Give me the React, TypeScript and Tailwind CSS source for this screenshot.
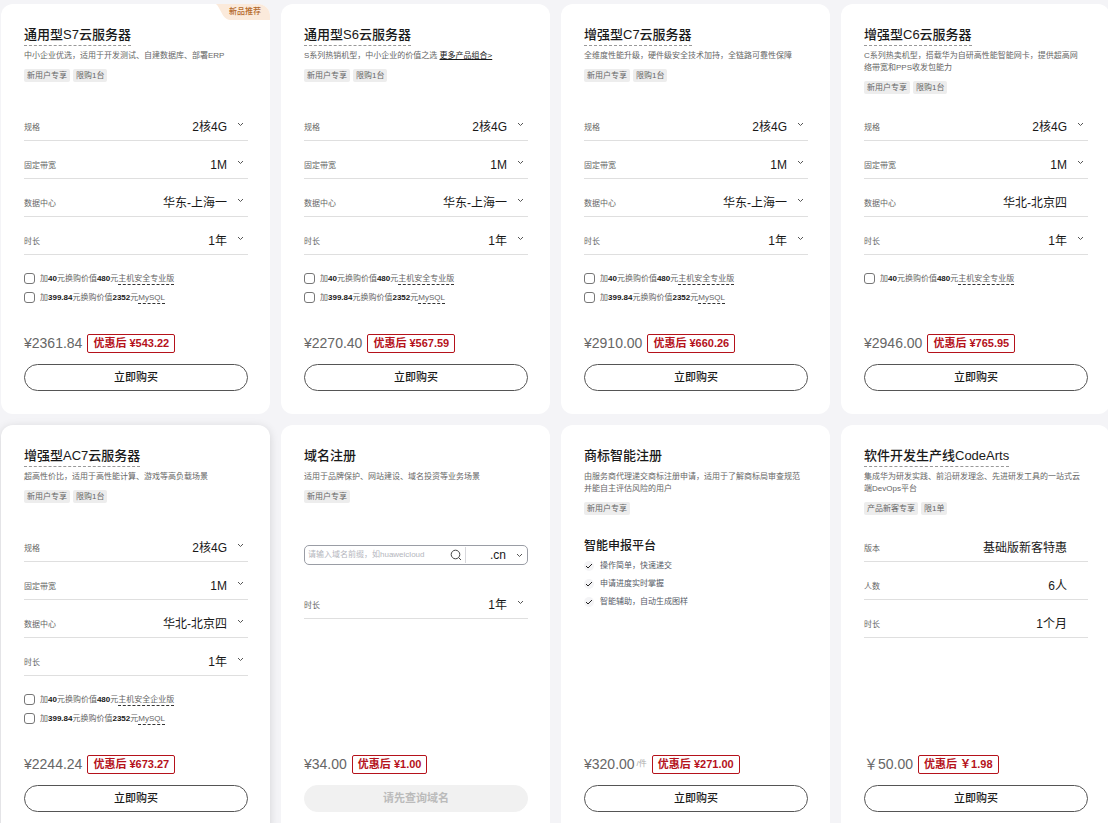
import React from "react";
import clsx from "clsx";

type Spec = {
  label: string;
  value: string;
  fixed?: boolean;
};

type Addon = {
  price: string;
  worth: string;
  name: string;
};

type Product = {
  title: string;
  dashed?: boolean;
  ribbon?: string;
  raised?: boolean;
  description: string;
  more?: string;
  tags: string[];
  specs: Spec[];
  addons?: Addon[];
  domainSearch?: boolean;
  features?: { title: string; items: string[] };
  price: string;
  unit?: string;
  discount: string;
  action?: string;
  disabled?: boolean;
};

const serverSpecs = (region: string, fixed = false): Spec[] => [
  { label: "规格", value: "2核4G" },
  { label: "固定带宽", value: "1M" },
  { label: "数据中心", value: region, fixed },
  { label: "时长", value: "1年" },
];

const hostPro: Addon = { price: "40", worth: "480", name: "主机安全专业版" };
const hostEnterprise: Addon = { price: "40", worth: "480", name: "主机安全企业版" };
const mysql: Addon = { price: "399.84", worth: "2352", name: "MySQL" };

const products: Product[] = [
  {
    title: "通用型S7云服务器",
    dashed: true,
    ribbon: "新品推荐",
    description: "中小企业优选，适用于开发测试、自建数据库、部署ERP",
    tags: ["新用户专享", "限购1台"],
    specs: serverSpecs("华东-上海一"),
    addons: [hostPro, mysql],
    price: "¥2361.84",
    discount: "¥543.22",
  },
  {
    title: "通用型S6云服务器",
    dashed: true,
    description: "S系列热销机型，中小企业的价值之选 ",
    more: "更多产品组合>",
    tags: ["新用户专享", "限购1台"],
    specs: serverSpecs("华东-上海一"),
    addons: [hostPro, mysql],
    price: "¥2270.40",
    discount: "¥567.59",
  },
  {
    title: "增强型C7云服务器",
    dashed: true,
    description: "全维度性能升级，硬件级安全技术加持，全链路可靠性保障",
    tags: ["新用户专享", "限购1台"],
    specs: serverSpecs("华东-上海一"),
    addons: [hostPro, mysql],
    price: "¥2910.00",
    discount: "¥660.26",
  },
  {
    title: "增强型C6云服务器",
    dashed: true,
    description:
      "C系列热卖机型，搭载华为自研高性能智能网卡，提供超高网\n络带宽和PPS收发包能力",
    tags: ["新用户专享", "限购1台"],
    specs: serverSpecs("华北-北京四", true),
    addons: [hostPro],
    price: "¥2946.00",
    discount: "¥765.95",
  },
  {
    title: "增强型AC7云服务器",
    dashed: true,
    raised: true,
    description: "超高性价比，适用于高性能计算、游戏等高负载场景",
    tags: ["新用户专享", "限购1台"],
    specs: serverSpecs("华北-北京四"),
    addons: [hostEnterprise, mysql],
    price: "¥2244.24",
    discount: "¥673.27",
  },
  {
    title: "域名注册",
    description: "适用于品牌保护、网站建设、域名投资等业务场景",
    tags: ["新用户专享"],
    domainSearch: true,
    specs: [{ label: "时长", value: "1年" }],
    price: "¥34.00",
    discount: "¥1.00",
    action: "请先查询域名",
    disabled: true,
  },
  {
    title: "商标智能注册",
    description:
      "由服务商代理递交商标注册申请，适用于了解商标局审查规范\n并能自主评估风险的用户",
    tags: ["新用户专享"],
    specs: [],
    features: {
      title: "智能申报平台",
      items: ["操作简单，快速递交", "申请进度实时掌握", "智能辅助，自动生成图样"],
    },
    price: "¥320.00",
    unit: "/件",
    discount: "¥271.00",
  },
  {
    title: "软件开发生产线CodeArts",
    dashed: true,
    description:
      "集成华为研发实践、前沿研发理念、先进研发工具的一站式云\n端DevOps平台",
    tags: ["产品新客专享", "限1单"],
    specs: [
      { label: "版本", value: "基础版新客特惠", fixed: true },
      { label: "人数", value: "6人", fixed: true },
      { label: "时长", value: "1个月", fixed: true },
    ],
    price: "￥50.00",
    discount: "￥1.98",
  },
];

export default function App() {
  return (
    <main className="min-h-screen overflow-hidden bg-[#f4f4f7] font-['Liberation_Sans','Noto_Sans_CJK_SC',sans-serif] text-[#191919]">
      <div className="-mr-[2px] grid grid-cols-4 gap-[11px] pt-1 pb-3 pl-px">
        {products.map((product) => (
          <ProductCard key={product.title} product={product} />
        ))}
      </div>
    </main>
  );
}

function ProductCard({ product }: { product: Product }) {
  return (
    <article
      className={clsx(
        "relative flex min-h-[410px] flex-col rounded-xl bg-white pt-[21px] pr-[22px] pb-[23px] pl-[23px]",
        product.raised && "shadow-[0_2px_10px_rgba(0,0,0,0.14)]",
      )}
    >
      {product.ribbon && <Ribbon text={product.ribbon} />}

      <header className="min-h-[78px]">
        <h2
          className={clsx(
            "w-fit border-b text-[13px] leading-5 font-medium whitespace-nowrap",
            product.dashed ? "border-dashed border-[#999]" : "border-transparent",
          )}
        >
          {product.title}
        </h2>
        <p className="mt-1 text-[8px] leading-3 whitespace-pre-line text-[#666]">
          {product.description}
          {product.more && (
            <a href="#more" className="text-[#191919] underline">
              {product.more}
            </a>
          )}
        </p>
        <div className="mt-[7px] flex gap-[3px]">
          {product.tags.map((tag) => (
            <span
              key={tag}
              className="rounded-xs bg-[#ededed] px-[3px] text-[8px] leading-[13px] text-[#666]"
            >
              {tag}
            </span>
          ))}
        </div>
      </header>

      {product.domainSearch && <DomainSearch />}
      {product.specs.map((spec) => (
        <SpecRow key={spec.label} spec={spec} />
      ))}
      {product.addons && (
        <div className="mt-[14px]">
          {product.addons.map((addon) => (
            <AddonOption key={addon.name} addon={addon} />
          ))}
        </div>
      )}
      {product.features && <FeatureList {...product.features} />}

      <footer className="mt-auto">
        <div className="flex items-center">
          <span className="text-sm leading-5 text-[#666]">{product.price}</span>
          {product.unit && (
            <span className="ml-0.5 text-[8px] text-[#aaa]">{product.unit}</span>
          )}
          <span className="ml-[5px] rounded-xs border border-[#b5121b] px-[5px] text-[11px] leading-[17px] font-bold whitespace-nowrap text-[#b5121b]">
            优惠后 {product.discount}
          </span>
        </div>
        <button
          type="button"
          disabled={product.disabled}
          className={clsx(
            "mt-[11px] block h-[27px] w-full rounded-full border text-[11px]",
            product.disabled
              ? "border-[#f1f1f1] bg-[#f1f1f1] font-bold text-[#bbb]"
              : "border-[#555] bg-white font-medium",
          )}
        >
          {product.action ?? "立即购买"}
        </button>
      </footer>
    </article>
  );
}

function Ribbon({ text }: { text: string }) {
  return (
    <div className="absolute top-0 right-0 h-4 w-[54px] overflow-hidden rounded-tr-xl">
      <svg viewBox="0 0 54 16" className="absolute inset-0 h-full w-full">
        <path d="M0 0H54V16H16C11 16 8.500 14 6.500 10.500L3 4C2 2 1 .8 0 0Z" fill="#fbeadb" />
      </svg>
      <span className="relative block pl-[13px] text-[8px] leading-4 font-medium text-[#b4692b]">
        {text}
      </span>
    </div>
  );
}

function SpecRow({ spec }: { spec: Spec }) {
  return (
    <label className="relative flex h-[38px] items-end border-b border-[#dfdfdf] pb-[5px]">
      <span className="text-[8px] leading-[14px] whitespace-nowrap text-[#666]">
        {spec.label}
      </span>
      {spec.fixed ? (
        <output className="flex-1 pr-[21px] text-right text-xs">{spec.value}</output>
      ) : (
        <>
          <select className="min-w-0 flex-1 appearance-none bg-transparent pr-[21px] text-right text-xs [text-align-last:right]">
            <option>{spec.value}</option>
          </select>
          <Chevron className="pointer-events-none absolute right-1 bottom-[13px]" />
        </>
      )}
    </label>
  );
}

function AddonOption({ addon }: { addon: Addon }) {
  return (
    <label className="flex h-[19px] items-center gap-[5px] text-[8px] whitespace-nowrap text-[#666]">
      <input
        type="checkbox"
        className="h-[11px] w-[11px] appearance-none rounded-[3px] border border-[#777] checked:bg-[#555]"
      />
      <span className="leading-[11px]">
        加<b className="text-[#191919]">{addon.price}</b>元换购价值
        <b className="text-[#191919]">{addon.worth}</b>元
        <a href="#addon" className="inline-block border-b border-dashed border-[#333] leading-[10px]">
          {addon.name}
        </a>
      </span>
    </label>
  );
}

function DomainSearch() {
  return (
    <div className="relative mt-[21px] mb-4 flex h-5 items-center rounded-[5px] border border-[#9a9da5]">
      <input
        type="text"
        aria-label="域名前缀"
        placeholder="请输入域名前缀，如huaweicloud"
        className="min-w-0 flex-1 bg-transparent pl-[3px] text-[8px] outline-none placeholder:text-[#b4b6bd]"
      />
      <button type="button" aria-label="查询" className="mr-[3px]">
        <svg viewBox="0 0 12 12" className="h-3 w-3" fill="none" stroke="#444" strokeWidth="1">
          <circle cx="5.500" cy="5.500" r="4.300" />
          <path d="M8.600 8.600l2.400 2.400" />
        </svg>
      </button>
      <select
        aria-label="域名后缀"
        className="h-4 w-[62px] appearance-none border-l border-[#d8d8dc] bg-transparent pr-[21px] text-right text-xs leading-4 [text-align-last:right]"
      >
        <option>.cn</option>
      </select>
      <Chevron className="pointer-events-none absolute right-1 bottom-1.5" />
    </div>
  );
}

function FeatureList({ title, items }: { title: string; items: string[] }) {
  return (
    <section className="mt-[14px]">
      <h3 className="text-xs font-medium">{title}</h3>
      <ul className="mt-[3px]">
        {items.map((item) => (
          <li key={item} className="flex h-[18px] items-center gap-1.5 text-[8px] text-[#555a66]">
            <svg viewBox="0 0 10 10" className="h-2.5 w-2.5" fill="none">
              <circle cx="5" cy="5" r="5" fill="#f4f4f6" />
              <path d="M2 5l2 2 4-4" stroke="#222" strokeWidth="1" />
            </svg>
            {item}
          </li>
        ))}
      </ul>
    </section>
  );
}

function Chevron({ className }: { className?: string }) {
  return (
    <svg viewBox="0 0 7 5" className={clsx("h-[5px] w-[7px]", className)} fill="none">
      <path d="M1 1l2.500 2.500L6 1" stroke="#555" strokeWidth="1" />
    </svg>
  );
}
